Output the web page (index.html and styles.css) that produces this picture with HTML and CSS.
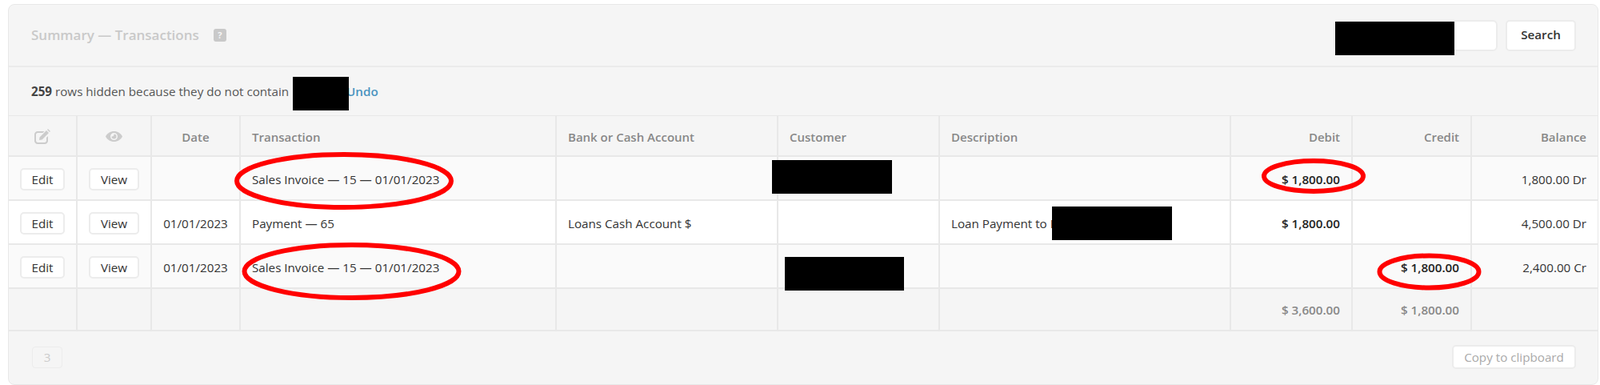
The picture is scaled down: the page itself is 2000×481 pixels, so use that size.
FILE: index.html
```html
<!DOCTYPE html>
<html lang="en">
<head>
<meta charset="utf-8">
<title>Summary — Transactions</title>
<link rel="stylesheet" href="styles.css">
</head>
<body>
<div class="panel">
  <header class="panel-head">
    <div class="title">Summary — Transactions <span class="help">?</span></div>
    <form class="search">
      <input class="search-input" type="text" aria-label="Search">
      <button class="btn btn-search" type="button">Search</button>
    </form>
  </header>
  <div class="notice"><b>259</b> rows hidden because they do not contain <span class="term"></span><a class="undo">Undo</a></div>
  <table class="grid">
    <colgroup>
      <col class="c-edit"><col class="c-view"><col class="c-date"><col class="c-trans"><col class="c-bank"><col class="c-cust"><col class="c-desc"><col class="c-debit"><col class="c-credit"><col class="c-bal">
    </colgroup>
    <thead>
      <tr>
        <th class="ctr"><svg class="ico-edit" viewBox="0 0 20 19"><path d="M4 3h8.500l-2 2H4.200C3 5 2 6 2 7.200v7.600C2 16 3 17 4.200 17h8.600c1.200 0 2.200-1 2.200-2.200V11l2-2v6c0 2.200-1.800 4-4 4H4c-2.200 0-4-1.800-4-4V7c0-2.200 1.800-4 4-4z"/><path d="M6.500 10.500 15 2l3 3-8.500 8.500-3.500.5zM16 1l1-1 3 3-1 1z"/></svg></th>
        <th class="ctr"><svg class="ico-eye" viewBox="0 0 21 13"><path fill-rule="evenodd" d="M10.500 0C15 0 19 2.600 21 6.500 19 10.400 15 13 10.500 13S2 10.400 0 6.500C2 2.600 6 0 10.500 0zm0 2a4.500 4.500 0 1 0 0 9 4.500 4.500 0 0 0 0-9z"/><path d="M10.500 3.500a3 3 0 1 1-3 3c1.500.5 3.500-1 3-3z"/></svg></th>
        <th class="ctr">Date</th>
        <th>Transaction</th>
        <th>Bank or Cash Account</th>
        <th>Customer</th>
        <th>Description</th>
        <th class="num">Debit</th>
        <th class="num">Credit</th>
        <th class="num">Balance</th>
      </tr>
    </thead>
    <tbody>
      <tr class="odd">
        <td class="ctr"><button class="btn btn-row btn-edit" type="button">Edit</button></td>
        <td class="ctr"><button class="btn btn-row btn-view" type="button">View</button></td>
        <td class="ctr"></td>
        <td>Sales Invoice — 15 — 01/01/2023</td>
        <td></td><td></td><td></td>
        <td class="num strong">$ 1,800.00</td>
        <td class="num"></td>
        <td class="num">1,800.00 Dr</td>
      </tr>
      <tr>
        <td class="ctr"><button class="btn btn-row btn-edit" type="button">Edit</button></td>
        <td class="ctr"><button class="btn btn-row btn-view" type="button">View</button></td>
        <td class="ctr">01/01/2023</td>
        <td>Payment — 65</td>
        <td>Loans Cash Account $</td>
        <td></td>
        <td>Loan Payment to B</td>
        <td class="num strong">$ 1,800.00</td>
        <td class="num"></td>
        <td class="num">4,500.00 Dr</td>
      </tr>
      <tr class="odd">
        <td class="ctr"><button class="btn btn-row btn-edit" type="button">Edit</button></td>
        <td class="ctr"><button class="btn btn-row btn-view" type="button">View</button></td>
        <td class="ctr">01/01/2023</td>
        <td>Sales Invoice — 15 — 01/01/2023</td>
        <td></td><td></td><td></td>
        <td class="num"></td>
        <td class="num strong">$ 1,800.00</td>
        <td class="num">2,400.00 Cr</td>
      </tr>
    </tbody>
    <tfoot>
      <tr>
        <td></td><td></td><td></td><td></td><td></td><td></td><td></td>
        <td class="num">$ 3,600.00</td>
        <td class="num">$ 1,800.00</td>
        <td></td>
      </tr>
    </tfoot>
  </table>
  <footer class="panel-foot">
    <span class="page">3</span>
    <button class="btn btn-copy" type="button">Copy to clipboard</button>
  </footer>
</div>
<svg class="markup" viewBox="0 0 2000 481" aria-hidden="true">
  <g class="rings">
    <ellipse cx="430" cy="226" rx="134" ry="33"/>
    <ellipse cx="439.500" cy="339" rx="134" ry="33"/>
    <ellipse cx="1642" cy="220" rx="62" ry="19"/>
    <ellipse cx="1786.500" cy="339.500" rx="62" ry="20"/>
  </g>
  <g class="redact">
    <rect x="1669" y="27" width="149" height="42"/>
    <rect x="366" y="96" width="70" height="42"/>
    <rect x="965" y="200" width="150" height="42"/>
    <rect x="1315" y="258" width="150" height="42"/>
    <rect x="981" y="321" width="149" height="42"/>
  </g>
</svg>
</body>
</html>
```

FILE: styles.css
```css
* { box-sizing: border-box; }
html, body { height: 100%; }
body {
  margin: 0;
  padding: 5px 2px 0 10px;
  background: #fff;
  color: #333;
  font: 15.2px/20px "Open Sans", "Noto Sans", sans-serif;
  overflow: hidden;
  position: relative;
}
.panel {
  height: 476px;
  background: #f5f5f5;
  border: 1px solid #e8e8e8;
  border-radius: 8px;
  overflow: hidden;
}
.panel-head {
  height: 78px;
  display: flex;
  align-items: center;
  justify-content: space-between;
  padding: 0 27px 0 28px;
  border-bottom: 2px solid #ebebeb;
}
.title {
  font-size: 17px;
  font-weight: 600;
  color: #c9c9c9;
  display: flex;
  align-items: center;
  gap: 18px;
}
.help {
  width: 16px;
  height: 16px;
  border-radius: 3px;
  background: #c9c9c9;
  color: #f5f5f5;
  font-size: 11px;
  line-height: 16px;
  text-align: center;
  font-weight: 700;
}
.search { display: flex; gap: 10px; margin: 0; }
.search-input {
  width: 205px;
  height: 39px;
  border: 2px solid #ececec;
  border-radius: 6px;
  background: #fff;
}
.btn {
  font: inherit;
  background: #fff;
  color: #333;
  border: 2px solid #ececec;
  border-radius: 5px;
  padding: 0;
}
.btn-search { width: 88px; height: 39px; padding-bottom: 2px; font-weight: 600; }
.notice {
  height: 61px;
  padding: 0 28px;
  display: flex;
  align-items: center;
  white-space: pre-wrap;
  color: #555;
  border-bottom: 1px solid #e8e8e8;
}
.notice b { color: #444; font-weight: 700; }
.term { width: 68px; }
.undo { color: #4a94c0; font-weight: 600; }
.grid {
  width: 100%;
  table-layout: fixed;
  border-collapse: collapse;
  border-bottom: 2px solid #e8e8e8;
}
.c-edit { width: 85px; }
.c-view { width: 93px; }
.c-date { width: 111px; }
.c-trans { width: 395px; }
.c-bank { width: 277px; }
.c-cust { width: 202px; }
.c-desc { width: 364px; }
.c-debit { width: 152px; }
.c-credit { width: 149px; }
.grid th, .grid td {
  padding: 0 14px;
  border-left: 2px solid #e8e8e8;
  border-bottom: 2px solid #e8e8e8;
  text-align: left;
  white-space: nowrap;
}
.grid th:first-child, .grid td:first-child { border-left: 0; }
.grid th {
  height: 50px;
  padding-top: 2px;
  font-size: 15px;
  font-weight: 600;
  color: #888;
}
.grid tbody td { height: 55px; background: #fff; padding-top: 2px; }
.grid tbody tr.odd td { background: #fafafa; }
.grid tfoot td { height: 53px; color: #888; font-weight: 600; border-bottom: 0; }
.grid .ctr { text-align: center; padding-left: 0; padding-right: 0; }
.grid .num { text-align: right; }
.grid .strong { font-weight: 600; color: #222; }
.ico-edit { width: 20px; height: 19px; fill: #ccc; display: block; margin: 0 auto; }
.ico-eye { width: 21px; height: 13px; fill: #ccc; display: block; margin: 0 auto; }
.btn-row { height: 28px; }
.btn-edit { width: 56px; }
.btn-view { width: 63px; }
.panel-foot {
  display: flex;
  justify-content: space-between;
  align-items: center;
  padding: 17px 27px 0 29px;
}
.page {
  width: 38px;
  height: 27px;
  border: 1px solid #ececec;
  border-radius: 4px;
  color: #ccc;
  text-align: center;
  line-height: 25px;
}
.btn-copy { width: 155px; height: 30px; color: #aaa; }
.markup {
  position: absolute;
  left: 0;
  top: 0;
  width: 2000px;
  height: 481px;
  pointer-events: none;
}
.rings ellipse { fill: none; stroke: #f00; stroke-width: 6; }
.redact rect { fill: #000; }
```
